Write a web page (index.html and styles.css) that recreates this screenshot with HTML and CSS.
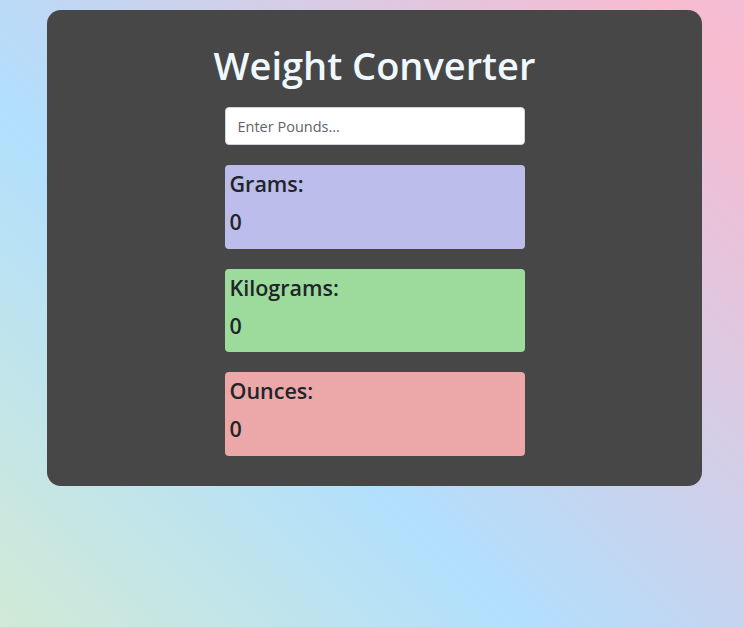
FILE: index.html
```html
<!DOCTYPE html>
<html lang="en">
<head>
<meta charset="utf-8">
<title>Weight Converter</title>
<link rel="stylesheet" href="styles.css">
</head>
<body>
<div class="card">
  <h1 class="title">Weight Converter</h1>
  <div class="column">
    <input class="pounds" type="text" placeholder="Enter Pounds...">
    <div class="result grams">
      <h4 class="label">Grams:</h4>
      <div class="value">0</div>
    </div>
    <div class="result kilos">
      <h4 class="label">Kilograms:</h4>
      <div class="value">0</div>
    </div>
    <div class="result ounces">
      <h4 class="label">Ounces:</h4>
      <div class="value">0</div>
    </div>
  </div>
</div>
</body>
</html>
```
FILE: styles.css
```css
html, body {
  margin: 0;
  height: 100%;
}
body {
  font-family: "Open Sans", "Noto Sans", sans-serif;
  background: linear-gradient(45deg, #d1ead6 0%, #b1dffd 38%, #f8bbd0 94%, #f3bdd3 100%);
  overflow: hidden;
}
.card {
  width: 655px;
  box-sizing: border-box;
  margin: 10px 0 0 47px;
  background: #474747;
  border-radius: 14px;
  padding: 32px 0 30px;
  display: flex;
  flex-direction: column;
  align-items: center;
}
.title {
  margin: 0 0 19px;
  font-size: 38px;
  font-weight: 600;
  line-height: 46px;
  color: #f0f8ff;
}
.column {
  width: 300px;
  display: flex;
  flex-direction: column;
  gap: 20px;
}
.pounds {
  box-sizing: border-box;
  height: 38px;
  width: 100%;
  margin: 0;
  padding: 6px 12px;
  border: 1px solid #ced4da;
  border-radius: 4px;
  font-family: inherit;
  font-size: 14.5px;
  color: #495057;
  background: #fff;
}
.pounds::placeholder {
  color: #5f6368;
}
.result {
  box-sizing: border-box;
  height: 83.6px;
  border-radius: 4px;
  padding: 5px;
  color: #212529;
}
.grams { background: #bdbdec; }
.kilos { background: #9cdb9c; }
.ounces { background: #eca8a8; }
.label, .value {
  margin: 0;
  font-size: 21.5px;
  font-weight: 600;
  line-height: 28px;
}
.label { margin-bottom: 10px; }
```
